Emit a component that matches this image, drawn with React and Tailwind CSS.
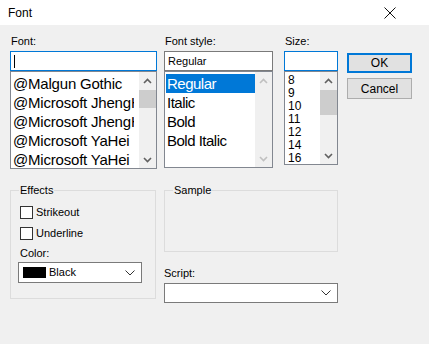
import React from "react";

const F = { fontFamily: '"Liberation Sans", Arial, sans-serif' };

function Chevron({ dir = "up", color = "#606060" }) {
  return (
    <svg width="9" height="6" viewBox="0 0 9 6">
      {dir === "up" ? (
        <polyline points="1,5 4.5,1.5 8,5" fill="none" stroke={color} strokeWidth="1.6" />
      ) : (
        <polyline points="1,1 4.5,4.5 8,1" fill="none" stroke={color} strokeWidth="1.6" />
      )}
    </svg>
  );
}

function ComboArrow() {
  return (
    <svg width="10" height="6" viewBox="0 0 10 6">
      <polyline points="0.5,0.5 5,5 9.5,0.5" fill="none" stroke="#333" strokeWidth="1" />
    </svg>
  );
}

function ScrollBar({ thumbTop, thumbH, disabled }) {
  const c = disabled ? "#c0c0c0" : "#606060";
  return (
    <div className="w-[17px] h-full bg-[#f0f0f0] flex flex-col shrink-0">
      <div className="h-[17px] flex items-center justify-center shrink-0">
        <Chevron dir="up" color={c} />
      </div>
      <div className="flex-1 relative">
        {!disabled && (
          <div className="absolute left-0 right-0 bg-[#cdcdcd]" style={{ top: thumbTop, height: thumbH }} />
        )}
      </div>
      <div className="h-[17px] flex items-center justify-center shrink-0">
        <Chevron dir="down" color={c} />
      </div>
    </div>
  );
}

export default function App() {
  const fonts = ["@Malgun Gothic", "@Microsoft JhengHei", "@Microsoft JhengHei UI", "@Microsoft YaHei", "@Microsoft YaHei UI"];
  const styles = ["Regular", "Italic", "Bold", "Bold Italic"];
  const sizes = ["8", "9", "10", "11", "12", "14", "16"];
  return (
    <div className="w-[429px] h-[344px] bg-[#f0f0f0] flex flex-col text-black overflow-hidden" style={F}>
      {/* title bar */}
      <div className="h-[25px] bg-white flex items-center justify-between shrink-0">
        <span className="pl-[8px] text-[12px] leading-none">Font</span>
        <svg width="12" height="12" viewBox="0 0 12 12" className="mr-[33px]">
          <path d="M0.5 0.5 L11.5 11.5 M11.5 0.5 L0.5 11.5" stroke="#111" strokeWidth="1" />
        </svg>
      </div>

      {/* top row */}
      <div className="flex pl-[10px] pt-[10px]">
        {/* Font */}
        <div className="w-[147px] flex flex-col">
          <div className="h-[13px] text-[11px] leading-[13px] pl-[1px] mb-[3px]">Font:</div>
          <div className="h-[20px] border border-[#0078d7] bg-white flex items-center pl-[3px]">
            <div className="w-[1px] h-[13px] bg-black" />
          </div>
          <div className="h-[98px] border border-[#828790] bg-white flex overflow-hidden">
            <div className="flex-1 pt-[2px] pl-[2px] mr-[5px] overflow-hidden">
              {fonts.map((f) => (
                <div key={f} className="h-[19px] leading-[19px] text-[15px] tracking-[-0.2px] whitespace-nowrap overflow-hidden">
                  {f}
                </div>
              ))}
            </div>
            <ScrollBar thumbTop={1} thumbH={18} />
          </div>
        </div>

        {/* Font style */}
        <div className="w-[109px] ml-[7px] flex flex-col">
          <div className="h-[13px] text-[11px] leading-[13px] pl-[1px] mb-[3px]">Font style:</div>
          <div className="h-[20px] border border-[#7a7a7a] bg-white flex items-center pl-[3px] text-[11px]">
            Regular
          </div>
          <div className="h-[97px] border border-[#828790] bg-white flex overflow-hidden">
            <div className="flex-1 pt-[2px] pl-[1px] overflow-hidden">
              {styles.map((s, i) => (
                <div
                  key={s}
                  className={
                    i === 0
                      ? "h-[19px] leading-[19px] text-[15px] tracking-[-0.5px] whitespace-nowrap bg-[#0078d7] text-white pl-[1px]"
                      : "h-[19px] leading-[19px] text-[15px] tracking-[-0.5px] whitespace-nowrap pl-[1px]"
                  }
                >
                  {s}
                </div>
              ))}
            </div>
            <ScrollBar disabled />
          </div>
        </div>

        {/* Size */}
        <div className="w-[54px] ml-[11px] flex flex-col">
          <div className="h-[13px] text-[11px] leading-[13px] pl-[1px] mb-[3px]">Size:</div>
          <div className="h-[20px] border border-[#0078d7] bg-white" />
          <div className="h-[94px] border border-[#828790] bg-white flex overflow-hidden">
            <div className="flex-1 pt-[2px] pl-[3px] overflow-hidden">
              {sizes.map((s) => (
                <div key={s} className="h-[13px] leading-[13px] text-[12px]">
                  {s}
                </div>
              ))}
            </div>
            <ScrollBar thumbTop={1} thumbH={25} />
          </div>
        </div>

        {/* Buttons */}
        <div className="w-[65px] ml-[9px] pt-[18px] flex flex-col">
          <div className="h-[20px] border-2 border-[#0078d7] bg-[#e1e1e1] flex items-center justify-center text-[12px]">
            OK
          </div>
          <div className="h-[21px] mt-[5px] border border-[#adadad] bg-[#e1e1e1] flex items-center justify-center text-[12px]">
            Cancel
          </div>
        </div>
      </div>

      {/* bottom row */}
      <div className="flex pl-[10px] mt-[21px]">
        {/* Effects */}
        <div className="w-[146px] h-[109px] border border-[#dcdcdc] relative flex flex-col pl-[9px] pt-[15px]">
          <span className="absolute -top-[7px] left-[8px] px-[1px] bg-[#f0f0f0] text-[11px] leading-[13px]">
            Effects
          </span>
          <div className="flex items-center h-[13px]">
            <div className="w-[13px] h-[13px] border border-[#333] bg-white" />
            <span className="ml-[3px] text-[11px]">Strikeout</span>
          </div>
          <div className="flex items-center h-[13px] mt-[8px]">
            <div className="w-[13px] h-[13px] border border-[#333] bg-white" />
            <span className="ml-[3px] text-[11px]">Underline</span>
          </div>
          <div className="text-[11px] leading-[13px] mt-[7px]">Color:</div>
          <div className="w-[124px] h-[21px] mt-[2px] -ml-[2px] border border-[#7a7a7a] bg-white flex items-center pl-[4px] pr-[6px]">
            <div className="w-[23px] h-[11px] bg-black" />
            <span className="ml-[3px] text-[11px] flex-1">Black</span>
            <ComboArrow />
          </div>
        </div>

        {/* Sample + Script */}
        <div className="w-[174px] ml-[8px] flex flex-col">
          <div className="h-[62px] border border-[#dcdcdc] relative">
            <span className="absolute -top-[7px] left-[8px] px-[1px] bg-[#f0f0f0] text-[11px] leading-[13px]">
              Sample
            </span>
          </div>
          <div className="text-[11px] leading-[13px] mt-[15px]">Script:</div>
          <div className="h-[20px] mt-[3px] border border-[#7a7a7a] bg-white flex items-center justify-end pr-[6px]">
            <ComboArrow />
          </div>
        </div>
      </div>
    </div>
  );
}
